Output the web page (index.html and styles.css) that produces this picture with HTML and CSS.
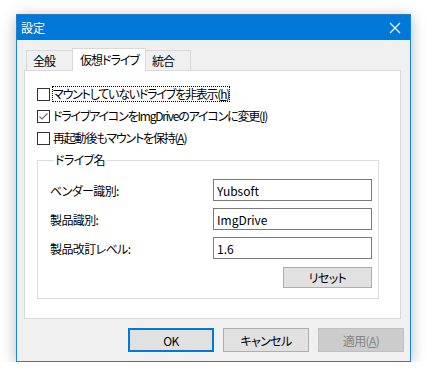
FILE: index.html
```html
<!DOCTYPE html>
<html lang="ja">
<head>
<meta charset="UTF-8">
<title>設定</title>
<link rel="stylesheet" href="styles.css">
</head>
<body>
<div class="window">
    <div class="titlebar">
        <span class="title">設定</span>
        <span class="close">
            <svg width="12" height="12" viewBox="0 0 12 12"><path d="M1 1L11 11M11 1L1 11" stroke="#fff" stroke-width="1.1" fill="none"/></svg>
        </span>
    </div>
    <div class="dialog-body">
        <div class="tabs">
            <div class="tab tab-general">全般</div>
            <div class="tab tab-active">仮想ドライブ</div>
            <div class="tab tab-merge">統合</div>
        </div>
        <div class="panel">
            <div class="check-row">
                <span class="checkbox"></span>
                <span class="check-label focused">マウントしていないドライブを非表示(<u>h</u>)</span>
            </div>
            <div class="check-row">
                <span class="checkbox">
                    <svg width="11" height="11" viewBox="0 0 11 11"><path d="M1.5 5.5L4 8L9.5 2.5" stroke="#6d6d6d" stroke-width="1.2" fill="none"/></svg>
                </span>
                <span class="check-label">ドライブアイコンをImgDriveのアイコンに変更(<u>I</u>)</span>
            </div>
            <div class="check-row">
                <span class="checkbox"></span>
                <span class="check-label">再起動後もマウントを保持(<u>A</u>)</span>
            </div>

            <fieldset class="group">
                <legend>ドライブ名</legend>
                <div class="field-row">
                    <label>ベンダー識別:</label>
                    <input type="text" value="Yubsoft">
                </div>
                <div class="field-row">
                    <label>製品識別:</label>
                    <input type="text" value="ImgDrive">
                </div>
                <div class="field-row">
                    <label>製品改訂レベル:</label>
                    <input type="text" value="1.6">
                </div>
                <div class="reset-row">
                    <button class="btn reset">リセット</button>
                </div>
            </fieldset>
        </div>
        <div class="actions">
            <button class="btn btn-default">OK</button>
            <button class="btn">キャンセル</button>
            <button class="btn btn-disabled">適用(<u>A</u>)</button>
        </div>
    </div>
</div>
</body>
</html>
```

FILE: styles.css
```css
body {
    margin: 0;
    padding: 14px 0 0 16px;
    background: #ffffff;
    font-family: "Noto Sans CJK JP", "Noto Sans", sans-serif;
    font-size: 12px;
    font-feature-settings: "palt";
    color: #000;
}

.window {
    width: 395px;
    height: 348px;
    box-sizing: border-box;
    border: 1px solid #1883d7;
    background: #f0f0f0;
    box-shadow: 0 3px 14px rgba(0,0,0,0.28);
    display: flex;
    flex-direction: column;
}

.titlebar {
    height: 25px;
    background: #0078d7;
    color: #fff;
    display: flex;
    align-items: center;
    justify-content: space-between;
    padding-left: 4px;
}

.title {
    line-height: 16px;
}

.close {
    width: 30px;
    display: flex;
    justify-content: center;
}

.dialog-body {
    padding: 8px 9px 0 7px;
}

/* tabs */
.tabs {
    display: flex;
    align-items: flex-end;
    height: 23px;
    padding-left: 2px;
    margin-bottom: -1px;
    position: relative;
    z-index: 1;
}

.tab {
    height: 20px;
    box-sizing: border-box;
    border: 1px solid #d9d9d9;
    border-bottom: none;
    background: #f0f0f0;
    margin-bottom: 1px;
    padding-left: 6px;
    line-height: 19px;
    white-space: nowrap;
    letter-spacing: -1px;
}

.tab-general {
    width: 47px;
}

.tab-active {
    width: 74px;
    height: 23px;
    margin: 0 -1px 0 -1px;
    background: #fff;
    padding-left: 7px;
    line-height: 21px;
}

.tab-merge {
    width: 46px;
}

.panel {
    width: 377px;
    height: 249px;
    box-sizing: border-box;
    background: #fff;
    border: 1px solid #d9d9d9;
    padding: 12px 12px 0 12px;
}

.check-row {
    height: 22px;
    display: flex;
    align-items: center;
}

.checkbox {
    width: 13px;
    height: 13px;
    box-sizing: border-box;
    border: 1px solid #333;
    background: #fff;
    margin-right: 3px;
    display: flex;
    align-items: center;
    justify-content: center;
}

.check-label {
    line-height: 14px;
    white-space: nowrap;
    letter-spacing: -1.2px;
}

.focused {
    outline: 1px dotted #000;
}

/* group box */
.group {
    margin: 4px 0 0 0;
    padding: 0 6px 10px 12px;
    width: 342px;
    box-sizing: border-box;
    border: 1px solid #dcdcdc;
}

.group legend {
    margin-left: 4px;
    padding: 0 1px;
    line-height: 14px;
    letter-spacing: -0.6px;
}

.field-row {
    display: flex;
    align-items: center;
    justify-content: space-between;
    margin-top: 7px;
}

.field-row:first-of-type {
    margin-top: 12px;
}

.field-row label {
    letter-spacing: -0.6px;
}

.field-row input {
    width: 159px;
    height: 22px;
    box-sizing: border-box;
    border: 1px solid #7a7a7a;
    padding: 0 3px;
    font-family: inherit;
    font-size: 12px;
    color: #000;
}

.reset-row {
    display: flex;
    justify-content: flex-end;
    margin-top: 8px;
}

/* buttons */
.btn {
    height: 24px;
    box-sizing: border-box;
    border: 1px solid #adadad;
    background: #e1e1e1;
    font-family: inherit;
    font-size: 12px;
    font-feature-settings: "palt";
    letter-spacing: -0.6px;
    color: #000;
    padding: 0;
}

.reset {
    width: 89px;
    height: 21px;
}

.actions {
    display: flex;
    justify-content: flex-end;
    gap: 9px;
    margin-top: 9px;
    margin-right: -3px;
}

.actions .btn {
    width: 86px;
}

.btn-default {
    border: 2px solid #0078d7;
}

.btn-disabled {
    background: #cccccc;
    border-color: #bfbfbf;
    color: #838383;
}
```
